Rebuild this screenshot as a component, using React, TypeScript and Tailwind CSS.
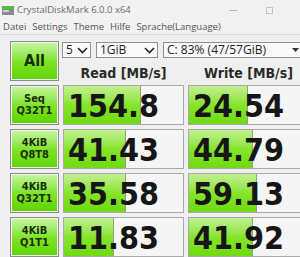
import React from "react";

type Row = {
  top: string;
  bottom: string;
  read: string;
  readBar: number;
  write: string;
  writeBar: number;
};

const rows: Row[] = [
  { top: "Seq", bottom: "Q32T1", read: "154.8", readBar: 77, write: "24.54", writeBar: 59 },
  { top: "4KiB", bottom: "Q8T8", read: "41.43", readBar: 62, write: "44.79", writeBar: 64 },
  { top: "4KiB", bottom: "Q32T1", read: "35.58", readBar: 62, write: "59.13", writeBar: 68 },
  { top: "4KiB", bottom: "Q1T1", read: "11.83", readBar: 50, write: "41.92", writeBar: 64 },
];

const uiFont = { fontFamily: '"Open Sans", "Noto Sans", sans-serif' };
const numFont = { fontFamily: '"DejaVu Sans Condensed", "DejaVu Sans", sans-serif' };

const GreenButton: React.FC<{ children: React.ReactNode; className?: string }> = ({
  children,
  className,
}) => (
  <div
    className={`w-[49px] border border-[#8c8c8c] bg-[#f4f4f4] p-[1px] ${className ?? ""}`}
  >
    <div className="flex h-full w-full flex-col items-center justify-center bg-gradient-to-b from-[#c4f59a] via-[#7fe425] to-[#5ed400] text-[#1b2e05]">
      {children}
    </div>
  </div>
);

const ResultBox: React.FC<{ value: string; bar: number }> = ({ value, bar }) => (
  <div className="relative h-[40px] w-[121px] shrink-0 overflow-hidden border border-[#a9a9a9] bg-[#f5f5f5]">
    <div
      className="absolute left-0 top-0 h-full border-r border-[#8aa874] bg-gradient-to-b from-[#c2f08e] via-[#86e428] to-[#70da12]"
      style={{ width: bar }}
    />
    <div
      className="relative flex h-full items-center pl-[4px] pt-[1px] text-[32px] font-bold leading-none text-[#161616]"
      style={numFont}
    >
      {value}
    </div>
  </div>
);

const Select: React.FC<{ label: string; width: string; arrow: "chevron" | "tri" }> = ({
  label,
  width,
  arrow,
}) => (
  <div
    className={`flex h-[16px] ${width} shrink-0 items-center justify-between border border-[#8f8f8f] bg-[#fafafa] pl-[3px] pr-[2px] text-[12px] leading-none text-[#222]`}
    style={uiFont}
  >
    <span>{label}</span>
    {arrow === "chevron" ? (
      <svg width="11" height="7" viewBox="0 0 11 7">
        <path d="M1 1 L5.5 5.5 L10 1" fill="none" stroke="#222" strokeWidth="1.6" />
      </svg>
    ) : (
      <svg width="7" height="4" viewBox="0 0 7 4">
        <path d="M0 0 L7 0 L3.5 4 Z" fill="#333" />
      </svg>
    )}
  </div>
);

export default function App() {
  return (
    <div className="h-[257px] w-[300px] overflow-hidden bg-[#efefef]">
      <div className="w-[320px]">
        {/* title bar */}
        <div className="flex h-[20px] items-center bg-[#f2f2f2] pl-[2px]" style={uiFont}>
          <svg width="12" height="11" viewBox="0 0 12 11" className="mr-[3px]">
            <rect x="0" y="1" width="12" height="3" fill="#4fbf3a" />
            <rect x="0" y="4" width="12" height="6" fill="#8c8c8c" />
            <rect x="1" y="5" width="6" height="2" fill="#cfcfcf" />
          </svg>
          <span className="w-[100px] whitespace-nowrap text-[9.5px] leading-none text-[#6b6b6b]">
            CrystalDiskMark 6.0.0 x64
          </span>
          <div className="ml-[112px] h-px w-[8px] bg-[#b8b8b8]" />
          <div className="ml-[29px] h-[7px] w-[7px] border border-[#c4c4c4]" />
        </div>
        {/* menu */}
        <div
          className="flex h-[15px] items-center gap-[6px] border-b border-[#dcdcdc] bg-[#f2f2f2] pl-[3px] text-[9.5px] leading-none text-[#555]"
          style={uiFont}
        >
          <span>Datei</span>
          <span>Settings</span>
          <span>Theme</span>
          <span>Hilfe</span>
          <span>Sprache(Language)</span>
        </div>

        <div className="flex flex-col gap-[4px] pl-[10px] pt-[6px]">
          {/* top: All + selectors + headers */}
          <div className="flex gap-[3px]">
            <GreenButton className="h-[40px]">
              <span className="text-[16px] font-bold leading-none" style={numFont}>
                All
              </span>
            </GreenButton>
            <div className="flex flex-col">
              <div className="mt-[1px] flex gap-[5px]">
                <Select label="5" width="w-[29px]" arrow="chevron" />
                <Select label="1GiB" width="w-[62px]" arrow="chevron" />
                <Select label="C: 83% (47/57GiB)" width="w-[139px]" arrow="tri" />
              </div>
              <div
                className="mt-[8px] flex gap-[4px] pl-[1px] text-[14px] font-bold leading-none text-[#2a2a2a]"
                style={numFont}
              >
                <span className="w-[121px] text-center">Read [MB/s]</span>
                <span className="w-[121px] text-center">Write [MB/s]</span>
              </div>
            </div>
          </div>

          {rows.map((r) => (
            <div key={r.top + r.bottom} className="flex gap-[4px]">
              <GreenButton className="h-[40px]">
                <span className="text-[11px] font-bold leading-[12px]" style={numFont}>
                  {r.top}
                </span>
                <span className="text-[11px] font-bold leading-[12px]" style={numFont}>
                  {r.bottom}
                </span>
              </GreenButton>
              <ResultBox value={r.read} bar={r.readBar} />
              <ResultBox value={r.write} bar={r.writeBar} />
            </div>
          ))}
        </div>
      </div>
    </div>
  );
}
